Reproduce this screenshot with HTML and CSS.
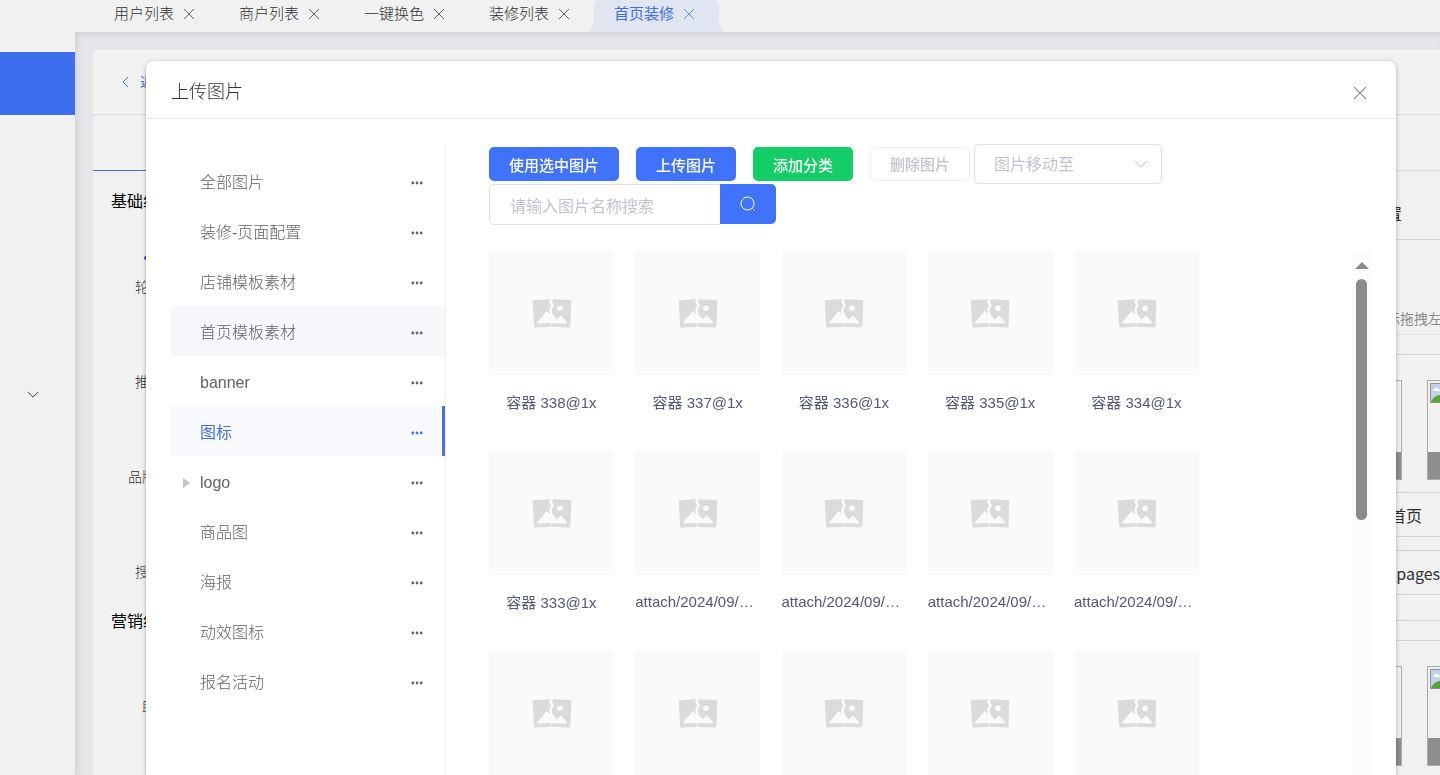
FILE: index.html
```
<!DOCTYPE html>
<html lang="zh-CN">
<head>
    <meta charset="utf-8">
    <title>首页装修</title>
    <link rel="stylesheet" href="styles.css">
</head>
<body>
    <svg class="sprite" aria-hidden="true">
        <symbol id="i-close" viewBox="0 0 12 12"><path d="M1 1l10 10M11 1L1 11"/></symbol>
        <symbol id="i-more" viewBox="0 0 12 4"><circle cx="1.8" cy="2" r="1.4"/><circle cx="6" cy="2" r="1.4"/><circle cx="10.2" cy="2" r="1.4"/></symbol>
        <symbol id="i-down" viewBox="0 0 14 8"><path d="M1 1l6 6 6-6"/></symbol>
        <symbol id="i-broken" viewBox="0 0 40 30">
            <path fill="#dbdbdb" d="M2 2.2L18 1.1l-.9 2.7 2 3.6-2.2 3.8 1.6 5-3.7-3.1L5.2 24.2v1.2l14.2-.3-1 1.7.5 2-15.4.6a1.3 1.3 0 0 1-1.3-1.2L.7 3.6A1.3 1.3 0 0 1 2 2.2z"/>
            <path fill="#dbdbdb" fill-rule="evenodd" d="M21 1.2l17 .9a1.3 1.3 0 0 1 1.3 1.4l-.8 24.600a1.300 1.300 0 0 1-1.300 1.300L19.500 28.800l-.3-1.800 1.200-1.700 14.900.3v-1.100l-6.300-7-4.500 4-3.700-5-1.300-4.800 2.500-4-2-3.700zM28 7.400a2.800 2.800 0 1 0 0 5.600 2.800 2.800 0 0 0 0-5.600z"/>
        </symbol>
        <symbol id="i-img" viewBox="0 0 16 20">
            <path fill="#c3d3ee" stroke="#8f8f8f" d="M.5.5h15v19H.5z"/>
            <path fill="#fff" d="M3 8c0-2 2-2 2.500-3 1-1 3 0 3 1.500 1.500 0 2 1.500 1 1.500z"/>
            <path fill="#55a630" d="M1 19c2-5 6-8 14-7v7z"/>
        </symbol>
    </svg>

    <aside class="side">
        <div class="side-active"></div>
        <svg class="side-arrow line-icon" width="12" height="7"><use href="#i-down"/></svg>
    </aside>

    <div class="page">
        <nav class="tabs">
            <a class="tab" href="#">用户列表 <svg class="line-icon" width="12" height="12"><use href="#i-close"/></svg></a>
            <a class="tab" href="#">商户列表 <svg class="line-icon" width="12" height="12"><use href="#i-close"/></svg></a>
            <a class="tab" href="#">一键换色 <svg class="line-icon" width="12" height="12"><use href="#i-close"/></svg></a>
            <a class="tab" href="#">装修列表 <svg class="line-icon" width="12" height="12"><use href="#i-close"/></svg></a>
            <a class="tab active" href="#">首页装修 <svg class="line-icon" width="12" height="12"><use href="#i-close"/></svg></a>
        </nav>
        <main class="content">
            <div class="back-bar">
                <svg class="line-icon" width="7" height="12" viewBox="0 0 7 12"><path d="M6 1L1 6l5 5"/></svg>
                <a href="#">返回</a>
            </div>
            <div class="editor">
                <section class="widgets">
                    <div class="widgets-tab"></div>
                    <h3>基础组件</h3>
                    <div class="widget"><i class="dot"></i>轮播图</div>
                    <div class="widget"><i></i>推荐位</div>
                    <div class="widget"><i></i>品牌列表</div>
                    <div class="widget"><i></i>搜索框</div>
                    <h3>营销组件</h3>
                    <div class="widget"><i></i>助力</div>
                </section>
                <section class="settings">
                    <div class="settings-tab"></div>
                    <h3>页面设置</h3>
                    <p class="tip">提示：可用鼠标拖拽左右</p>
                    <div class="slides">
                        <div class="slide"></div>
                        <div class="slide"><svg width="16" height="20"><use href="#i-img"/></svg></div>
                    </div>
                    <div class="field first"><span>标题</span>首页</div>
                    <div class="field"><span>链接</span>/pages/index</div>
                    <div class="rule"></div>
                    <div class="slides">
                        <div class="slide"></div>
                        <div class="slide"><svg width="16" height="20"><use href="#i-img"/></svg></div>
                    </div>
                </section>
            </div>
        </main>
    </div>

    <div class="dialog" role="dialog" aria-labelledby="dialog-title">
        <header class="dialog-head">
            <h2 id="dialog-title">上传图片</h2>
            <button class="dialog-close" aria-label="关闭"><svg class="line-icon" width="14" height="14"><use href="#i-close"/></svg></button>
        </header>
        <div class="dialog-body">
            <ul class="tree">
                <li><a href="#">全部图片</a><svg width="12" height="4"><use href="#i-more"/></svg></li>
                <li><a href="#">装修-页面配置</a><svg width="12" height="4"><use href="#i-more"/></svg></li>
                <li><a href="#">店铺模板素材</a><svg width="12" height="4"><use href="#i-more"/></svg></li>
                <li class="hover"><a href="#">首页模板素材</a><svg width="12" height="4"><use href="#i-more"/></svg></li>
                <li><a href="#">banner</a><svg width="12" height="4"><use href="#i-more"/></svg></li>
                <li class="current"><a href="#">图标</a><svg width="12" height="4"><use href="#i-more"/></svg></li>
                <li class="parent"><a href="#">logo</a><svg width="12" height="4"><use href="#i-more"/></svg></li>
                <li><a href="#">商品图</a><svg width="12" height="4"><use href="#i-more"/></svg></li>
                <li><a href="#">海报</a><svg width="12" height="4"><use href="#i-more"/></svg></li>
                <li><a href="#">动效图标</a><svg width="12" height="4"><use href="#i-more"/></svg></li>
                <li><a href="#">报名活动</a><svg width="12" height="4"><use href="#i-more"/></svg></li>
            </ul>

            <div class="library">
                <div class="toolbar">
                    <button class="btn primary">使用选中图片</button>
                    <button class="btn primary">上传图片</button>
                    <button class="btn success">添加分类</button>
                    <button class="btn plain" disabled>删除图片</button>
                    <div class="select">
                        <select aria-label="图片移动至"><option>图片移动至</option></select>
                        <svg class="line-icon" width="14" height="8"><use href="#i-down"/></svg>
                    </div>
                </div>
                <form class="search">
                    <input type="text" placeholder="请输入图片名称搜索" aria-label="图片名称">
                    <button type="button" aria-label="搜索"><svg class="line-icon" width="16" height="16" viewBox="0 0 16 16"><circle cx="7.500" cy="7.500" r="6.500"/><path d="M12.500 12.500l2.500 2.500"/></svg></button>
                </form>
                <div class="scroller">
                    <div class="grid">
                        <figure><div><svg width="40" height="30"><use href="#i-broken"/></svg></div><figcaption>容器 338@1x</figcaption></figure>
                        <figure><div><svg width="40" height="30"><use href="#i-broken"/></svg></div><figcaption>容器 337@1x</figcaption></figure>
                        <figure><div><svg width="40" height="30"><use href="#i-broken"/></svg></div><figcaption>容器 336@1x</figcaption></figure>
                        <figure><div><svg width="40" height="30"><use href="#i-broken"/></svg></div><figcaption>容器 335@1x</figcaption></figure>
                        <figure><div><svg width="40" height="30"><use href="#i-broken"/></svg></div><figcaption>容器 334@1x</figcaption></figure>
                        <figure><div><svg width="40" height="30"><use href="#i-broken"/></svg></div><figcaption>容器 333@1x</figcaption></figure>
                        <figure><div><svg width="40" height="30"><use href="#i-broken"/></svg></div><figcaption class="long">attach/2024/09/…</figcaption></figure>
                        <figure><div><svg width="40" height="30"><use href="#i-broken"/></svg></div><figcaption class="long">attach/2024/09/…</figcaption></figure>
                        <figure><div><svg width="40" height="30"><use href="#i-broken"/></svg></div><figcaption class="long">attach/2024/09/…</figcaption></figure>
                        <figure><div><svg width="40" height="30"><use href="#i-broken"/></svg></div><figcaption class="long">attach/2024/09/…</figcaption></figure>
                        <figure><div><svg width="40" height="30"><use href="#i-broken"/></svg></div></figure>
                        <figure><div><svg width="40" height="30"><use href="#i-broken"/></svg></div></figure>
                        <figure><div><svg width="40" height="30"><use href="#i-broken"/></svg></div></figure>
                        <figure><div><svg width="40" height="30"><use href="#i-broken"/></svg></div></figure>
                        <figure><div><svg width="40" height="30"><use href="#i-broken"/></svg></div></figure>
                    </div>
                    <div class="scrollbar"><div class="thumb"></div></div>
                </div>
            </div>
        </div>
    </div>
</body>
</html>
```
FILE: styles.css
```
* {
    box-sizing: border-box;
}

body {
    margin: 0;
    height: 100vh;
    display: flex;
    overflow: hidden;
    background: #f1f1f1;
    color: #303133;
    font: 16px/24px "Liberation Sans", "Noto Sans CJK SC", sans-serif;
}

a {
    color: inherit;
    text-decoration: none;
}

h2, h3, p, ul, figure {
    margin: 0;
    padding: 0;
    font-size: 16px;
    font-weight: 400;
}

button, input, select {
    font: inherit;
    margin: 0;
}

svg {
    display: block;
    flex: none;
}

.sprite {
    position: absolute;
    width: 0;
    height: 0;
}

.line-icon {
    fill: none;
    stroke: currentColor;
    stroke-width: 1;
}

/* left menu */
.side {
    flex: 0 0 75px;
    padding-top: 52px;
    z-index: 1;
    box-shadow: 1px 0 8px rgba(0, 21, 61, .1);
    clip-path: inset(32px -10px 0 0);
}

.side-active {
    height: 63px;
    background: #3d6eed;
}

.side-arrow {
    margin: 276px 0 0 27px;
}

/* page behind the dialog */
.page {
    flex: 1;
    min-width: 0;
    display: flex;
    flex-direction: column;
}

.tabs {
    display: flex;
    flex: 0 0 32px;
    padding-left: 19px;
}

.tab {
    position: relative;
    display: flex;
    align-items: center;
    gap: 9px;
    width: 125px;
    padding: 0 0 5px 20px;
    font-size: 15px;
    font-weight: 300;
}

.tab .line-icon {
    opacity: .75;
}

.tab.active {
    background: #dfe5f1;
    color: #406ee0;
    font-weight: 400;
    border-radius: 5px 5px 0 0;
}

.tab.active::before,
.tab.active::after {
    content: "";
    position: absolute;
    bottom: 0;
    width: 4px;
    height: 10px;
    background: #dfe5f1;
}

.tab.active::before {
    right: 100%;
    clip-path: polygon(100% 0, 100% 100%, 0 100%);
}

.tab.active::after {
    left: 100%;
    clip-path: polygon(0 0, 100% 100%, 0 100%);
}

.content {
    flex: 1;
    display: flex;
    flex-direction: column;
    min-height: 0;
    padding: 18px 0 0 18px;
    background: #e4e5e9;
    box-shadow: inset 0 4px 6px -4px rgba(0, 21, 61, .15);
}

.back-bar {
    display: flex;
    align-items: center;
    gap: 11px;
    flex: 0 0 65px;
    padding-left: 29px;
    background: #f1f1f1;
    border-bottom: 1px solid #dadada;
    color: #4a70da;
    font-size: 14px;
}

.editor {
    flex: 1;
    display: flex;
    justify-content: space-between;
    min-height: 0;
    overflow: hidden;
    background: #f1f1f1;
    border-radius: 5px 0 0;
}

.widgets {
    width: 126px;
}

.widgets-tab {
    height: 56px;
    border-bottom: 1px solid #4a70da;
}

.widgets h3 {
    height: 40px;
    padding: 19px 0 0 18px;
    color: #000;
}

.widget {
    height: 95px;
    padding-top: 45px;
    text-align: center;
    font-size: 14px;
    font-weight: 300;
}

.widget i {
    display: block;
    height: 19px;
    margin-left: 51px;
}

.widget .dot::before {
    content: "";
    display: block;
    width: 4px;
    height: 4px;
    border-radius: 50%;
    background: #5b3fd6;
}

.settings {
    width: 138px;
    overflow: hidden;
    white-space: nowrap;
}

.settings-tab {
    height: 56px;
    border-bottom: 1px solid #dcdcdf;
}

.settings h3 {
    height: 69px;
    padding: 32px 0 0 36px;
    border-bottom: 1px solid #d4d5d9;
}

.tip {
    height: 95px;
    padding-top: 67px;
    border-bottom: 1px solid #e2e2e4;
    color: #8a8a8d;
    font-size: 14px;
}

.slides {
    display: flex;
    gap: 25px;
    height: 139px;
    margin-top: 19px;
    padding-top: 25px;
    border-top: 1px solid #cfd1d6;
    border-bottom: 1px solid #cfd1d6;
}

.slide {
    flex: 0 0 100px;
    height: 100px;
    padding: 2px;
    border: 1px solid #aaa;
    background: linear-gradient(transparent 71px, #8e8e8e 71px);
}

.field {
    display: flex;
    height: 45px;
    margin-top: 13px;
    padding-top: 10px;
    border-top: 1px solid #cfd1d6;
    border-bottom: 1px solid #cfd1d6;
    font-family: "Noto Sans CJK SC", sans-serif;
}

.field.first {
    height: 44px;
    margin-top: 0;
    border-top: 0;
}

.field span {
    flex: 0 0 88px;
}

.rule {
    height: 26px;
    border-bottom: 1px solid #cfd1d6;
}

/* dialog */
.dialog {
    position: fixed;
    z-index: 2;
    top: 61px;
    right: 44px;
    bottom: 0;
    left: 146px;
    display: flex;
    flex-direction: column;
    background: #fff;
    border-radius: 8px 8px 0 0;
    box-shadow: 0 1px 4px rgba(0, 0, 0, .3);
}

.dialog-head {
    display: flex;
    align-items: center;
    justify-content: space-between;
    flex: 0 0 58px;
    padding: 5px 29px 0 25px;
    border-bottom: 1px solid #ebebeb;
}

.dialog-head h2 {
    font-size: 18px;
    font-weight: 300;
}

.dialog-close {
    padding: 2px 0 0;
    border: 0;
    background: none;
    color: #85878c;
}

.dialog-body {
    flex: 1;
    display: flex;
    min-height: 0;
    padding: 25px 25px 0;
}

.tree {
    flex: 0 0 275px;
    padding-top: 12px;
    border-right: 1px solid #eee;
    list-style: none;
    color: #606266;
    font-weight: 300;
}

.tree li {
    display: flex;
    align-items: center;
    height: 50px;
    padding: 3px 22px 0 29px;
}

.tree a {
    flex: 1;
}

.tree svg {
    fill: #606266;
}

.tree .hover {
    background: #f5f7fa;
}

.tree .current {
    padding-right: 19px;
    border-right: 3px solid #4a70e0;
    background: #f8faff;
    color: #406ee0;
    font-weight: 400;
}

.tree .current svg {
    fill: #406ee0;
}

.tree .parent {
    padding-left: 12px;
}

.tree .parent::before {
    content: "";
    margin-right: 10px;
    border: 5px solid transparent;
    border-left: 7px solid #c0c4cc;
    border-right: 0;
}

.library {
    flex: 1;
    min-width: 0;
    display: flex;
    flex-direction: column;
    padding-left: 43px;
}

.toolbar {
    display: flex;
    align-items: center;
    gap: 17px;
}

.btn {
    height: 34px;
    padding: 3px 20px 0;
    border: 0;
    border-radius: 5px;
    color: #fff;
    font-size: 15px;
    font-weight: 500;
}

.primary {
    background: #4073fa;
}

.success {
    background: #13ce66;
}

.plain {
    padding: 2px 19px 0;
    border: 1px solid #ebeef5;
    background: #fff;
    color: #c0c4cc;
}

.select {
    position: relative;
    width: 188px;
    margin-left: -13px;
    color: #c0c4cc;
}

.select select {
    width: 100%;
    height: 40px;
    padding: 2px 40px 0 19px;
    border: 1px solid #dcdfe6;
    border-radius: 5px;
    background: #fff;
    color: inherit;
    appearance: none;
}

.select svg {
    position: absolute;
    top: 16px;
    right: 14px;
    pointer-events: none;
}

.search {
    display: flex;
    width: 287px;
}

.search input {
    flex: 1;
    min-width: 0;
    height: 41px;
    padding: 4px 20px 0;
    border: 1px solid #dcdfe6;
    border-right: 0;
    border-radius: 5px 0 0 5px;
}

.search input::placeholder {
    color: #c0c4cc;
}

.search button {
    display: grid;
    place-items: center;
    width: 56px;
    height: 40px;
    padding: 0;
    border: 0;
    border-radius: 0 5px 5px 0;
    background: #4073fa;
    color: #fff;
}

.scroller {
    flex: 1;
    display: flex;
    justify-content: space-between;
    min-height: 0;
    margin-top: 25px;
    overflow: hidden;
}

.grid {
    display: grid;
    grid-template-columns: repeat(5, 125px);
    grid-auto-rows: 200px;
    justify-content: space-between;
    width: 710px;
}

.grid div {
    display: grid;
    place-items: center;
    height: 125px;
    background: #fafafa;
}

.grid figcaption {
    padding-top: 16px;
    overflow: hidden;
    color: #515a6e;
    font-size: 15px;
    text-align: center;
    white-space: nowrap;
}

.grid .long {
    padding-top: 15px;
    text-align: left;
}

.scrollbar {
    width: 19px;
    padding-top: 12px;
    background: #fcfcfc;
}

.scrollbar::before {
    content: "";
    display: block;
    width: 0;
    margin-left: 3px;
    border: 7px solid transparent;
    border-top: 0;
    border-bottom-color: #8b8b8b;
}

.thumb {
    width: 11px;
    height: 241px;
    margin: 10px 0 0 4px;
    border-radius: 6px;
    background: #8b8b8b;
}
```
